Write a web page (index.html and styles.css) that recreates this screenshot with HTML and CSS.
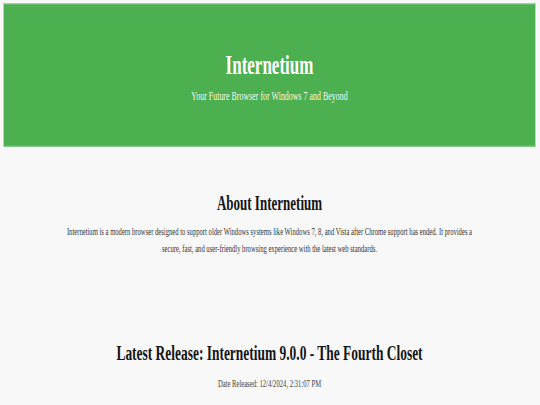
FILE: index.html
```html
<!DOCTYPE html>
<html lang="en">
<head>
<meta charset="utf-8">
<title>Internetium</title>
<link rel="stylesheet" href="styles.css">
</head>
<body>
<div class="page">
  <header class="header">
    <h1 class="title">Internetium</h1>
    <p class="tagline">Your Future Browser for Windows 7 and Beyond</p>
  </header>
  <section class="about">
    <h2 class="heading">About Internetium</h2>
    <p class="text">Internetium is a modern browser designed to support older Windows systems like Windows 7, 8, and Vista after Chrome support has ended. It provides a secure, fast, and user-friendly browsing experience with the latest web standards.</p>
  </section>
  <section class="release">
    <h2 class="heading heading-release">Latest Release: Internetium 9.0.0 - The Fourth Closet</h2>
    <p class="date">Date Released: 12/4/2024, 2:31:07 PM</p>
  </section>
</div>
</body>
</html>
```
FILE: styles.css
```css
html {
  margin: 0;
  padding: 0;
  background: #f8f8f8;
}

body {
  margin: 0;
  padding: 0;
  min-height: 405px;
  background: #f8f8f8;
}

/* The reference is a horizontally condensed rendering: text is laid out
   at 0.62 of its height and then stretched vertically. */
.page {
  width: 540px;
  height: 251px;
  box-sizing: border-box;
  padding: 2.48px 4px 0 3px;
  transform: scaleY(1.6129);
  transform-origin: 0 0;
  font-family: "Liberation Serif", "Times New Roman", serif;
  color: #222;
}

.header {
  height: 88.04px;
  box-sizing: border-box;
  background: #4caf50;
  border-left: 1px solid #b3dcb4;
  border-right: 1px solid #b3dcb4;
  box-shadow: inset 0 0.62px 0 #b3dcb4, inset 0 -0.62px 0 #8fcc92;
  color: #fff;
  text-align: center;
  padding-top: 29.4px;
}

.title {
  margin: 0;
  font-size: 17px;
  line-height: 1;
  font-weight: bold;
}

.tagline {
  margin: 7.44px 0 0;
  font-size: 7.94px;
  line-height: 1;
  color: #f2f8f2;
}

.heading {
  margin: 0;
  font-size: 13.02px;
  line-height: 1;
  font-weight: bold;
  text-align: center;
  color: #141414;
}

.about {
  padding-top: 28.77px;
}

.text {
  margin: 6.82px auto 0;
  max-width: 410.4px;
  font-size: 6.63px;
  line-height: 9.92px;
  text-align: center;
  color: #333;
}

.release {
  padding-top: 52.7px;
}

.heading-release {
  font-size: 13.45px;
}

.date {
  margin: 7.44px 0 0;
  font-size: 6.63px;
  line-height: 9.92px;
  text-align: center;
  color: #444;
}
```
